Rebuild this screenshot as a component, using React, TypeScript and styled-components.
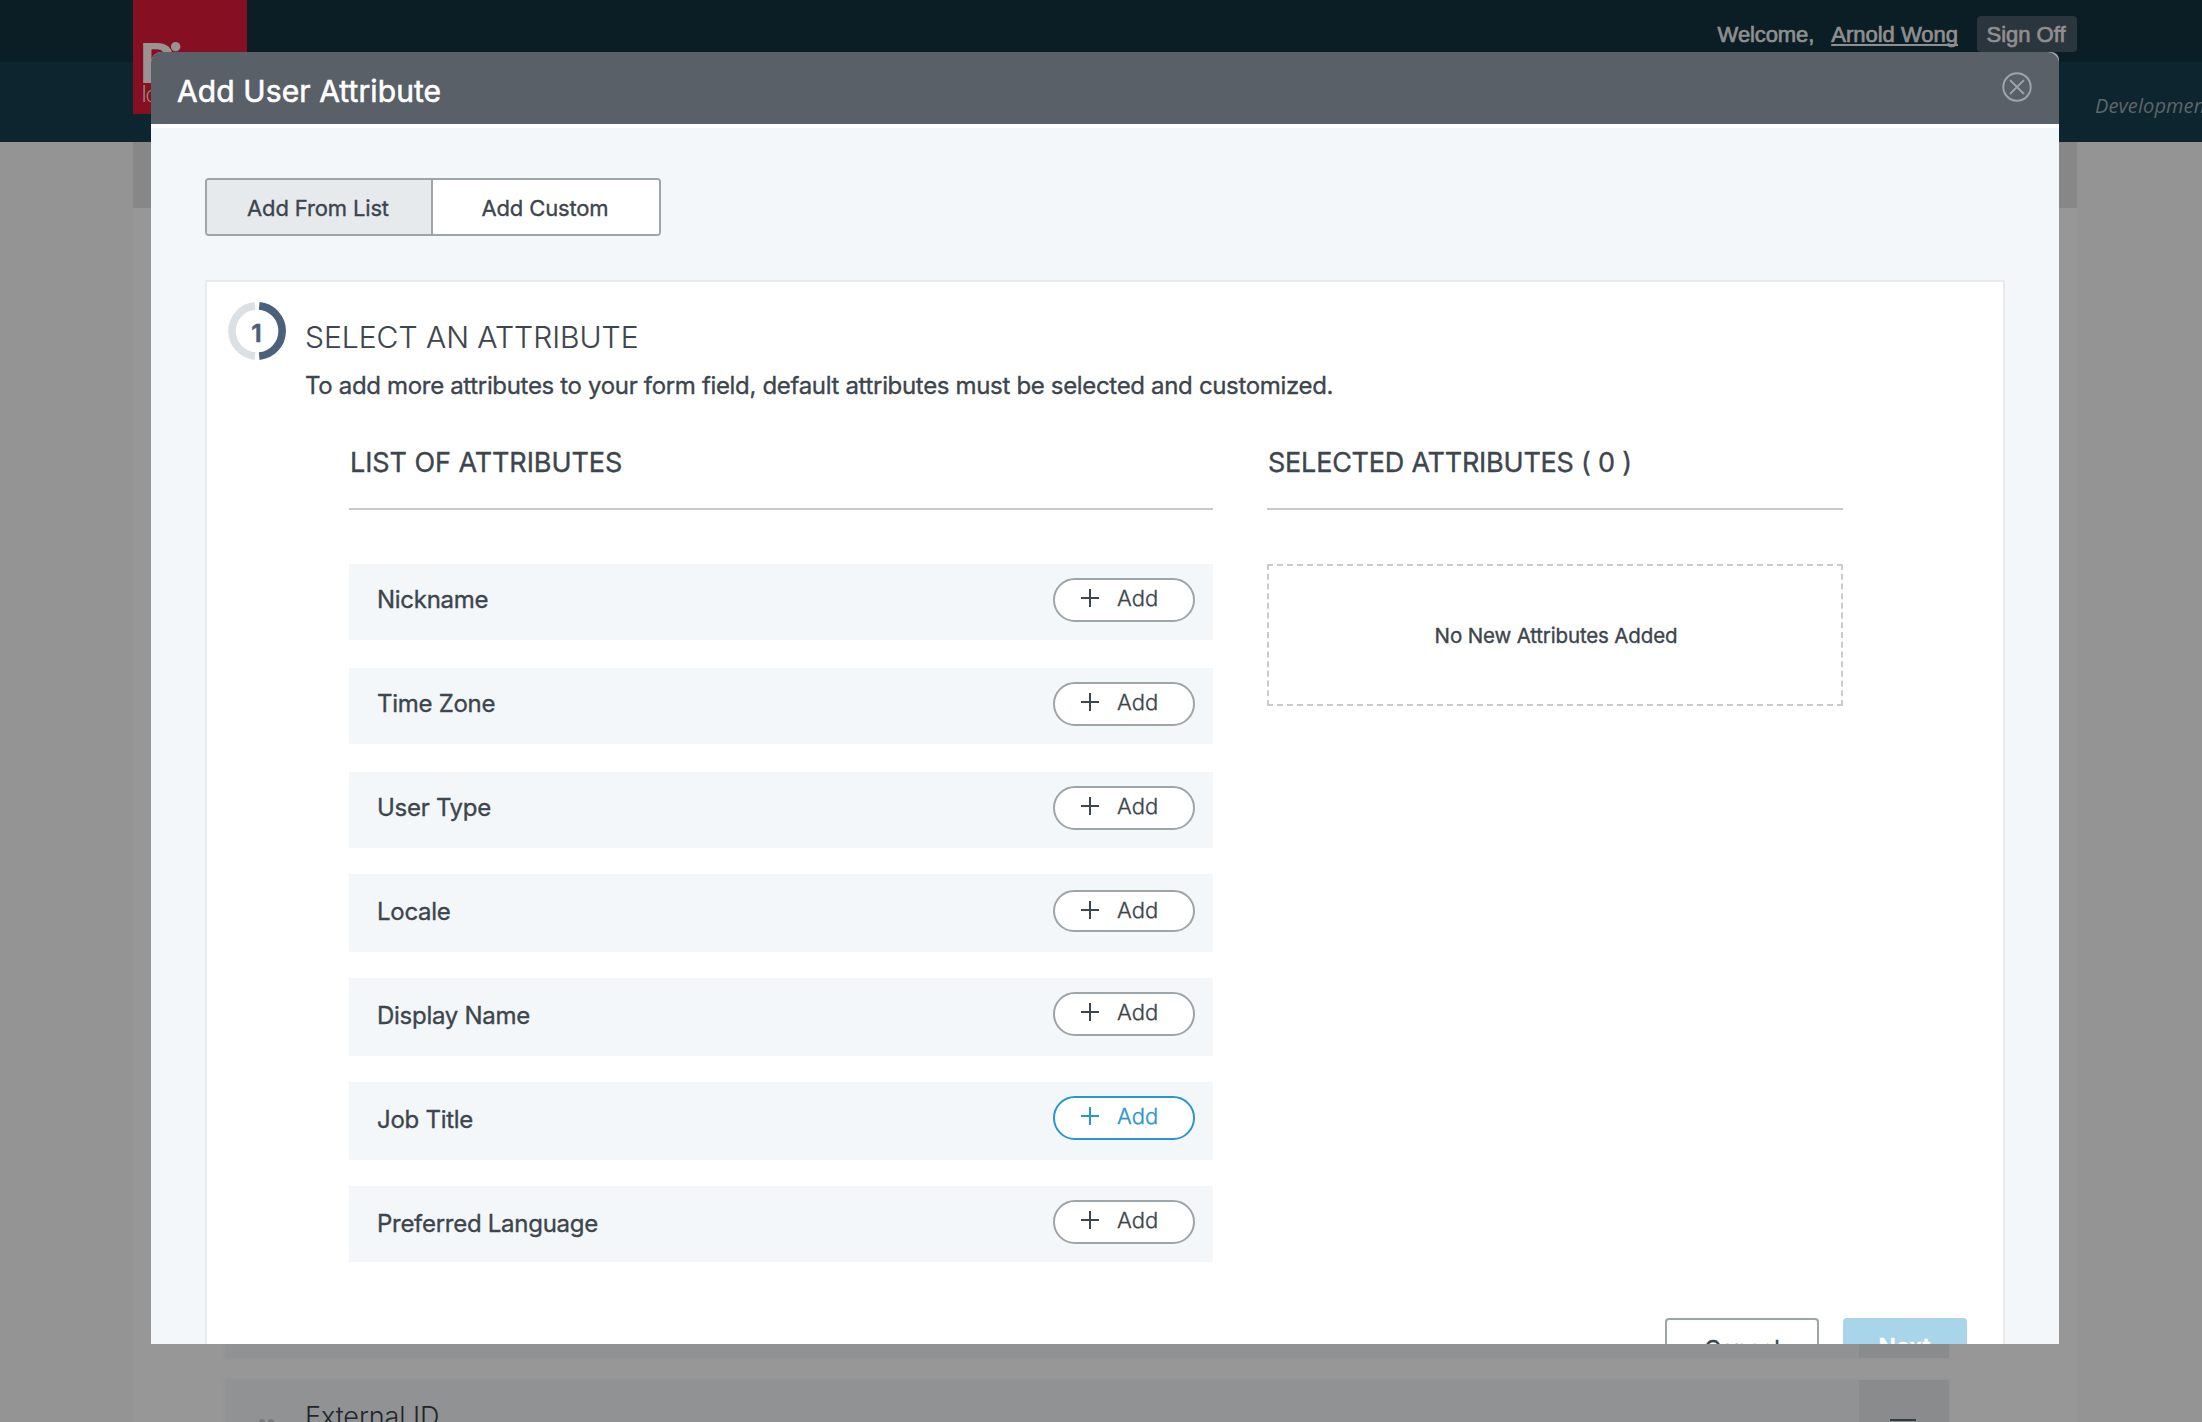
import React from 'react';
import styled, { createGlobalStyle } from 'styled-components';

const GlobalStyle = createGlobalStyle`
  *, *::before, *::after { box-sizing: border-box; }
  html, body { margin: 0; padding: 0; }
  body { background: #949494; font-family: Inter, "Liberation Sans", sans-serif; color: #3d454d; }
  button { font: inherit; color: inherit; margin: 0; padding: 0; cursor: pointer; }
  h1, h2, h3, p, ul { margin: 0; padding: 0; font-weight: 400; }
`;

/* ---------- page behind the dialog ---------- */

const Page = styled.div`
  position: relative;
  width: 2202px;
  height: 1422px;
  overflow: hidden;
  display: flex;
  flex-direction: column;
  background: #949494;
`;

const TopBar = styled.header`
  flex: none;
  height: 62px;
  padding: 16px 125px 0 133px;
  display: flex;
  justify-content: flex-end;
  align-items: flex-start;
  background: #0b1e26;
  color: #8f8f8f;
  font: 400 22px/37px "Liberation Sans", sans-serif;
  -webkit-text-stroke: 0.7px currentColor;
`;

const Welcome = styled.span`
  margin-right: 17px;
  letter-spacing: -0.1px;
`;

const UserLink = styled.a`
  margin-right: 19px;
  text-decoration: underline;
  text-decoration-thickness: 2px;
  text-underline-offset: 2px;
  text-decoration-skip-ink: none;
`;

const SignOff = styled.button`
  width: 100px;
  height: 36px;
  padding-right: 2px;
  border: 0;
  border-radius: 4px;
  background: #2b353d;
`;

const NavBar = styled.nav`
  flex: none;
  height: 80px;
  padding: 29px 0 0 2095px;
  overflow: hidden;
  white-space: nowrap;
  background: #0d252f;
  color: #5f6668;
  font: italic 400 20px/29px "Open Sans", sans-serif;
  letter-spacing: 0.1px;
`;

const Logo = styled.div`
  position: absolute;
  left: 133px;
  top: 0;
  width: 114px;
  height: 114px;
  overflow: hidden;
  background: #861022;
  color: #9b9292;
`;

const LogoName = styled.div`
  padding: 29px 0 0 6px;
  font: 900 55px/66px Lato, sans-serif;
  letter-spacing: -5px;
  white-space: nowrap;
`;

const LogoTag = styled.div`
  margin-top: -17px;
  padding-left: 8px;
  font: 300 24px/30px Lato, sans-serif;
  letter-spacing: -1.5px;
`;

const Container = styled.main`
  flex: 1;
  width: 1944px;
  margin-left: 133px;
  display: flex;
  flex-direction: column;
  background: #979797;
`;

const Banner = styled.div`
  height: 66px;
  background: #878787;
`;

const PageRows = styled.div`
  margin-top: 1076px;
  padding: 0 126px 0 90px;
  display: flex;
  flex-direction: column;
  gap: 18px;
`;

const PageRow = styled.div`
  height: 76px;
  display: flex;
  border: 2px solid #949596;
  background: #919293;
`;

const DragHandle = styled.div`
  width: 80px;
  padding: 39px 0 0 34px;
  display: grid;
  grid-template-columns: 6px 6px;
  gap: 3px;
  align-content: start;

  i { height: 6px; border-radius: 3px; background: #77797b; }
`;

const PageRowName = styled.div`
  flex: 1;
  padding-top: 20px;
  font-size: 27px;
  line-height: 34px;
  font-weight: 300;
  letter-spacing: -0.1px;
  color: #22262a;
`;

const PageRowMenu = styled.div`
  width: 90px;
  padding: 39px 0 0 31px;
  background: #8a8b8c;

  i { display: block; width: 26px; height: 2px; background: #333b3f; }
`;

/* ---------- dialog ---------- */

const Dialog = styled.section`
  position: absolute;
  left: 151px;
  top: 52px;
  width: 1908px;
  height: 1292px;
  overflow: hidden;
  border-radius: 10px 8px 0 0;
  background: #a5a8aa;
  -webkit-text-stroke: 0.35px currentColor;
`;

const TitleBar = styled.div`
  height: 72px;
  padding: 0 27px 0 26px;
  display: flex;
  justify-content: space-between;
  background: #596067;
  border-radius: 10px 12px 0 0;
`;

const Title = styled.h1`
  padding-top: 19px;
  font-size: 30px;
  line-height: 40px;
  letter-spacing: 0.1px;
  -webkit-text-stroke-width: 0.6px;
  color: #fff;
`;

const CloseButton = styled.button`
  width: 30px;
  height: 30px;
  margin-top: 20px;
  border: 0;
  background: none;

  svg { display: block; }
`;

const DialogBody = styled.div`
  height: 1220px;
  padding: 50px 54px 0;
  border-top: 4px solid #fff;
  background: #f3f7fa;
`;

const Tabs = styled.div`
  width: 456px;
  height: 58px;
  display: flex;
  border: 2px solid #9da5a8;
  border-radius: 4px;
  overflow: hidden;
  background: #fff;
`;

const Tab = styled.button<{ $active?: boolean }>`
  flex: ${(p) => (p.$active ? '0 0 226px' : '1')};
  padding: 2px 2px 0 0;
  border: 0;
  border-right: ${(p) => (p.$active ? '2px solid #9da5a8' : '0')};
  background: ${(p) => (p.$active ? '#e6eaed' : '#fff')};
  font-size: 22px;
  letter-spacing: -0.15px;
`;

const Panel = styled.div`
  margin-top: 44px;
  height: 1140px;
  padding: 19px 36px 0 20px;
  border: 2px solid #e6eaed;
  background: #fff;
`;

const StepHead = styled.div`
  display: flex;
`;

const StepBadge = styled.div`
  position: relative;
  width: 61px;
  height: 61px;
  margin-right: 16px;

  svg { display: block; }
`;

const StepNumber = styled.span`
  position: absolute;
  left: 0;
  top: 17px;
  width: 59px;
  text-align: center;
  font-size: 24px;
  line-height: 31px;
  font-weight: 700;
  color: #4a617b;
`;

const StepTitle = styled.h2`
  padding: 16px 0 0 1px;
  font-size: 30px;
  line-height: 40px;
  font-weight: 300;
  -webkit-text-stroke-width: 0.15px;
`;

const StepText = styled.p`
  padding: 14px 0 0 1px;
  font-size: 24px;
  line-height: 30px;
  letter-spacing: -0.33px;
  white-space: nowrap;
`;

const Columns = styled.div`
  margin: 45px 0 0 122px;
  display: grid;
  grid-template-columns: 864px 576px;
  column-gap: 54px;
  align-items: start;
`;

const ColumnTitle = styled.h3<{ $tight?: boolean }>`
  height: 64px;
  margin-bottom: 54px;
  padding-left: 1px;
  border-bottom: 2px solid #c9c9c9;
  font-size: 27px;
  line-height: 34px;
  letter-spacing: ${(p) => (p.$tight ? '-0.23px' : '-0.08px')};
`;

const AttributeList = styled.ul`
  list-style: none;
`;

const Attribute = styled.li<{ $height: number; $gap: number }>`
  height: ${(p) => p.$height}px;
  margin-bottom: ${(p) => p.$gap}px;
  padding: 0 18px 0 28px;
  display: flex;
  justify-content: space-between;
  align-items: flex-start;
  background: #f3f7fa;
`;

const AttributeName = styled.span<{ $shift: number }>`
  padding-top: ${(p) => 20 + p.$shift}px;
  font-size: 24px;
  line-height: 31px;
  letter-spacing: -0.28px;
`;

const AddButton = styled.button<{ $active?: boolean; $short?: boolean }>`
  width: 142px;
  height: ${(p) => (p.$short ? 42 : 44)}px;
  margin-top: ${(p) => (p.$short ? 16 : 14)}px;
  padding: 3px 0 0 26px;
  display: flex;
  align-items: flex-start;
  gap: 18px;
  border: 2px solid ${(p) => (p.$active ? '#2996cc' : '#9da5a8')};
  border-radius: 22px;
  background: #fff;
  color: ${(p) => (p.$active ? '#2996cc' : '#3d454d')};
  font-size: 22px;
  line-height: 30px;
  font-weight: 300;

  svg { flex: none; margin-top: 6px; }
`;

const EmptyBox = styled.div`
  height: 142px;
  padding-left: 2px;
  display: flex;
  align-items: center;
  justify-content: center;
  border: 2px dashed #cbcbcb;
  font-size: 20.5px;
  letter-spacing: -0.15px;
`;

const Actions = styled.div`
  margin-top: 56px;
  display: flex;
  justify-content: flex-end;
  gap: 24px;
`;

const CancelButton = styled.button`
  width: 154px;
  height: 58px;
  padding-top: 4px;
  border: 2px solid #9da5a8;
  border-radius: 4px;
  background: #fff;
  font-size: 23px;
`;

const NextButton = styled.button`
  width: 124px;
  height: 58px;
  padding-right: 1px;
  border: 0;
  border-radius: 4px;
  background: #a8d5ea;
  color: #fff;
  font-size: 23px;
  font-weight: 600;
`;

type AttributeData = {
  name: string;
  height: number;
  gap: number;
  shift: number;
  active?: boolean;
  short?: boolean;
};

const attributes: AttributeData[] = [
  { name: 'Nickname', height: 76, gap: 28, shift: 0 },
  { name: 'Time Zone', height: 76, gap: 28, shift: 0 },
  { name: 'User Type', height: 76, gap: 26, shift: 0 },
  { name: 'Locale', height: 78, gap: 26, shift: 2, short: true },
  { name: 'Display Name', height: 78, gap: 26, shift: 2 },
  { name: 'Job Title', height: 78, gap: 26, shift: 2, active: true },
  { name: 'Preferred Language', height: 76, gap: 0, shift: 2 },
];

const PlusIcon = () => (
  <svg width="18" height="18" viewBox="0 0 18 18" fill="none" stroke="currentColor" strokeWidth="2">
    <path d="M9 0V18M0 9H18" />
  </svg>
);

const CloseIcon = () => (
  <svg width="30" height="30" viewBox="0 0 30 30" fill="none" stroke="#9da5a8" strokeWidth="2" strokeLinecap="round">
    <circle cx="15" cy="15" r="13.7" />
    <path d="M8.6 8.6L21.4 21.4M21.4 8.6L8.6 21.4" />
  </svg>
);

const StepRing = () => (
  <svg width="61" height="61" viewBox="0 0 61 61" fill="none" strokeWidth="7.6">
    <path d="M28 4.9A25.2 25.2 0 0 0 28 55.1" stroke="#dbe0e4" />
    <path d="M32.2 4.9A25.2 25.2 0 0 1 32.2 55.1" stroke="#4a617b" />
  </svg>
);

export default function App() {
  return (
    <>
      <GlobalStyle />
      <Page>
        <TopBar>
          <Welcome>Welcome,</Welcome>
          <UserLink>Arnold Wong</UserLink>
          <SignOff>Sign Off</SignOff>
        </TopBar>
        <NavBar>Development</NavBar>
        <Logo>
          <LogoName>Ping</LogoName>
          <LogoTag>Identity</LogoTag>
        </Logo>
        <Container>
          <Banner />
          <PageRows>
            <PageRow>
              <PageRowName />
              <PageRowMenu />
            </PageRow>
            <PageRow>
              <DragHandle><i /><i /></DragHandle>
              <PageRowName>External ID</PageRowName>
              <PageRowMenu><i /></PageRowMenu>
            </PageRow>
          </PageRows>
        </Container>

        <Dialog>
          <TitleBar>
            <Title>Add User Attribute</Title>
            <CloseButton aria-label="Close"><CloseIcon /></CloseButton>
          </TitleBar>
          <DialogBody>
            <Tabs>
              <Tab $active>Add From List</Tab>
              <Tab>Add Custom</Tab>
            </Tabs>
            <Panel>
              <StepHead>
                <StepBadge>
                  <StepRing />
                  <StepNumber>1</StepNumber>
                </StepBadge>
                <div>
                  <StepTitle>SELECT AN ATTRIBUTE</StepTitle>
                  <StepText>
                    To add more attributes to your form field, default attributes must be selected and customized.
                  </StepText>
                </div>
              </StepHead>
              <Columns>
                <div>
                  <ColumnTitle>LIST OF ATTRIBUTES</ColumnTitle>
                  <AttributeList>
                    {attributes.map((a) => (
                      <Attribute key={a.name} $height={a.height} $gap={a.gap}>
                        <AttributeName $shift={a.shift}>{a.name}</AttributeName>
                        <AddButton $active={a.active} $short={a.short}>
                          <PlusIcon />
                          Add
                        </AddButton>
                      </Attribute>
                    ))}
                  </AttributeList>
                </div>
                <div>
                  <ColumnTitle $tight>SELECTED ATTRIBUTES ( 0 )</ColumnTitle>
                  <EmptyBox>No New Attributes Added</EmptyBox>
                </div>
              </Columns>
              <Actions>
                <CancelButton>Cancel</CancelButton>
                <NextButton>Next</NextButton>
              </Actions>
            </Panel>
          </DialogBody>
        </Dialog>
      </Page>
    </>
  );
}
